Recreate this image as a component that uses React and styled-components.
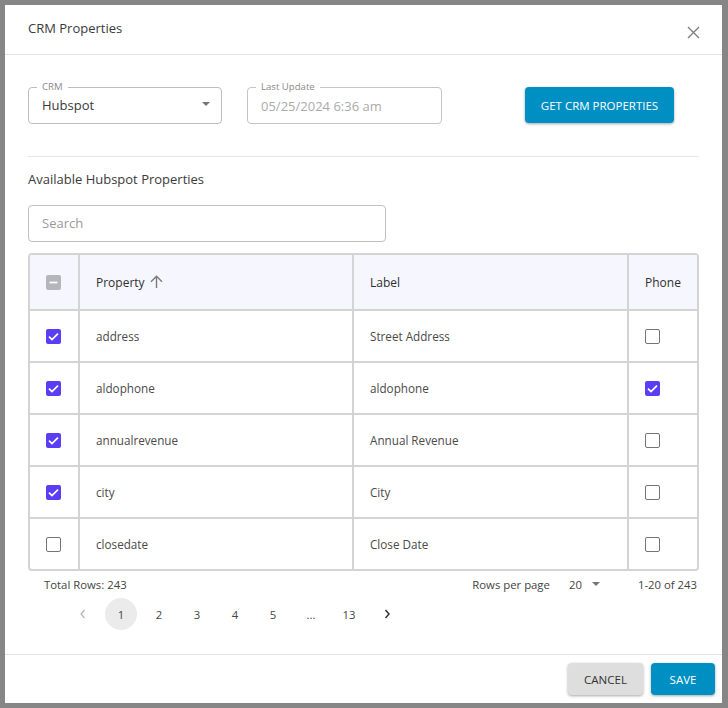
import styled, { createGlobalStyle } from 'styled-components';

const rows = [
  { name: 'address', label: 'Street Address', selected: true, phone: false },
  { name: 'aldophone', label: 'aldophone', selected: true, phone: true },
  { name: 'annualrevenue', label: 'Annual Revenue', selected: true, phone: false },
  { name: 'city', label: 'City', selected: true, phone: false },
  { name: 'closedate', label: 'Close Date', selected: false, phone: false },
];

const pages = ['1', '2', '3', '4', '5', '...', '13'];

const Check = ({ state }) => {
  if (state === 'checked') {
    return (
      <CheckBox $fill="#5b3df5">
        <svg width="15" height="15" viewBox="0 0 15 15">
          <path d="M3 7.6l3 3 6-6" fill="none" stroke="#fff" strokeWidth="1.7" />
        </svg>
      </CheckBox>
    );
  }
  if (state === 'mixed') {
    return (
      <CheckBox $fill="#b5b5bb">
        <svg width="15" height="15" viewBox="0 0 15 15">
          <path d="M3.5 7.5h8" fill="none" stroke="#fff" strokeWidth="1.7" />
        </svg>
      </CheckBox>
    );
  }
  return <CheckBox $outline />;
};

const App = () => {
  return (
    <>
      <GlobalStyle />
      <Dialog>
        <Header>
          <Title>CRM Properties</Title>
          <CloseButton>
            <svg width="13" height="13" viewBox="0 0 13 13">
              <path d="M1 1l11 11M12 1L1 12" fill="none" stroke="#7d7d7d" strokeWidth="1.3" />
            </svg>
          </CloseButton>
        </Header>

        <Content>
          <TopRow>
            <Field $width="194px">
              <FieldLabel>CRM</FieldLabel>
              <FieldValue>Hubspot</FieldValue>
              <Caret />
            </Field>
            <Field $width="195px" $disabled>
              <FieldLabel>Last Update</FieldLabel>
              <FieldValue $disabled>05/25/2024 6:36 am</FieldValue>
            </Field>
            <PrimaryButton $width="149px" $height="36px" $left="58px">GET CRM PROPERTIES</PrimaryButton>
          </TopRow>

          <Divider />
          <SectionTitle>Available Hubspot Properties</SectionTitle>
          <SearchBox>Search</SearchBox>

          <Table>
            <HeaderRow>
              <CheckCell $header><Check state="mixed" /></CheckCell>
              <Cell $header>
                Property
                <SortIcon width="13" height="14" viewBox="0 0 13 14">
                  <path d="M6.500 13V1.500M1 6.800l5.500-5.500L12 6.800" fill="none" stroke="#7b7b7b" strokeWidth="1.4" />
                </SortIcon>
              </Cell>
              <Cell $header>Label</Cell>
              <Cell $header $last>Phone</Cell>
            </HeaderRow>
            {rows.map((row) => (
              <Row key={row.name}>
                <CheckCell><Check state={row.selected ? 'checked' : 'empty'} /></CheckCell>
                <Cell>{row.name}</Cell>
                <Cell>{row.label}</Cell>
                <CheckCell $last><Check state={row.phone ? 'checked' : 'empty'} /></CheckCell>
              </Row>
            ))}
          </Table>

          <TableFooter>
            <span>Total Rows: 243</span>
            <RowsPerPage>
              <span>Rows per page</span>
              <PageSize>20</PageSize>
              <SmallCaret />
              <RowCount>1-20 of 243</RowCount>
            </RowsPerPage>
          </TableFooter>

          <Pagination>
            <PageArrow>
              <svg width="8" height="10" viewBox="0 0 8 10">
                <path d="M5.500 1L2 5l3.500 4" fill="none" stroke="#b4b4b4" strokeWidth="1.2" />
              </svg>
            </PageArrow>
            {pages.map((page) => (
              <PageItem key={page} $active={page === '1'}>{page}</PageItem>
            ))}
            <PageArrow>
              <svg width="8" height="10" viewBox="0 0 8 10">
                <path d="M2.500 1L6 5 2.500 9" fill="none" stroke="#333" strokeWidth="1.500" />
              </svg>
            </PageArrow>
          </Pagination>
        </Content>

        <Footer>
          <CancelButton>CANCEL</CancelButton>
          <PrimaryButton $width="64px" $height="32px">SAVE</PrimaryButton>
        </Footer>
      </Dialog>
    </>
  );
};

export default App;

const GlobalStyle = createGlobalStyle`
  html, body {
    margin: 0;
    height: 708px;
    overflow: hidden;
    background: #868686;
  }

  body {
    font-family: "Open Sans", "Liberation Sans", sans-serif;
    color: #3b3b3b;
  }
`;

const Dialog = styled.div`
  width: 717px;
  height: 698px;
  margin: 5px 0 0 5px;
  background: #fff;
  display: flex;
  flex-direction: column;
`;

const Header = styled.div`
  height: 50px;
  flex: none;
  box-sizing: border-box;
  padding: 13px 22px 0 23px;
  border-bottom: 1px solid #e2e2e2;
  display: flex;
  justify-content: space-between;
  align-items: flex-start;
`;

const Title = styled.div`
  font-size: 13px;
  line-height: 20px;
  color: #3a3a3a;
`;

const CloseButton = styled.div`
  display: flex;
  margin-top: 8px;
`;

const Content = styled.div`
  flex: 1;
  padding: 32px 23px 0;
`;

const TopRow = styled.div`
  display: flex;
  gap: 25px;
`;

const Field = styled.div`
  position: relative;
  width: ${(p) => p.$width};
  height: 37px;
  box-sizing: border-box;
  border: 1px solid ${(p) => (p.$disabled ? '#c4c4c4' : '#bdbdbd')};
  border-radius: 4px;
  padding: 0 13px ${(p) => (p.$disabled ? '0' : '2px')};
  display: flex;
  align-items: center;
`;

const FieldLabel = styled.span`
  position: absolute;
  left: 8px;
  top: -8px;
  padding: 0 5px;
  background: #fff;
  font-size: 9.6px;
  line-height: 13px;
  color: #8a8a8a;
`;

const FieldValue = styled.span`
  font-size: 13px;
  color: ${(p) => (p.$disabled ? '#aaaaaa' : '#3a3a3a')};
`;

const Caret = styled.span`
  position: absolute;
  right: 11px;
  top: 14px;
  border-left: 4.500px solid transparent;
  border-right: 4.500px solid transparent;
  border-top: 4.500px solid #757575;
`;

const PrimaryButton = styled.button`
  width: ${(p) => p.$width};
  height: ${(p) => p.$height};
  margin-left: ${(p) => p.$left || 0};
  padding: 0;
  border: none;
  border-radius: 4px;
  background: #008fc3;
  color: #fff;
  font-family: inherit;
  font-size: 11.5px;
  box-shadow: 0 1px 3px rgba(0, 0, 0, 0.35);
`;

const CancelButton = styled.button`
  width: 75px;
  height: 32px;
  padding: 0;
  border: none;
  border-radius: 4px;
  background: #dedede;
  color: #333;
  font-family: inherit;
  font-size: 11.5px;
  box-shadow: 0 1px 3px rgba(0, 0, 0, 0.35);
`;

const Divider = styled.div`
  height: 1px;
  margin-top: 32px;
  background: #e6e6e6;
`;

const SectionTitle = styled.div`
  margin-top: 13px;
  font-size: 13px;
  line-height: 18px;
  color: #3a3a3a;
`;

const SearchBox = styled.div`
  width: 358px;
  height: 37px;
  box-sizing: border-box;
  margin-top: 17px;
  padding: 0 13px 2px;
  border: 1px solid #c0c0c0;
  border-radius: 4px;
  display: flex;
  align-items: center;
  font-size: 13px;
  color: #9a9a9a;
`;

const Table = styled.div`
  width: 671px;
  box-sizing: border-box;
  margin-top: 11px;
  border: 2px solid #d4d4d4;
  border-radius: 4px;
`;

const Row = styled.div`
  display: grid;
  grid-template-columns: 50px 274px 275px 1fr;
  height: 52px;
  box-sizing: border-box;
  border-bottom: 2px solid #d4d4d4;

  &:last-child {
    height: 50px;
    border-bottom: none;
  }
`;

const HeaderRow = styled(Row)`
  height: 56px;
  background: #f6f7fe;
`;

const Cell = styled.div`
  box-sizing: border-box;
  display: flex;
  align-items: center;
  padding: 0 16px;
  font-size: ${(p) => (p.$header ? '12px' : '11.7px')};
  color: ${(p) => (p.$header ? '#2f2f2f' : '#4a4a4a')};
  border-right: ${(p) => (p.$last ? 'none' : '2px solid #d4d4d4')};
`;

const CheckCell = styled(Cell)`
  padding: 0 0 0 16px;
`;

const CheckBox = styled.span`
  width: 15px;
  height: 15px;
  box-sizing: border-box;
  display: flex;
  border-radius: 2px;
  background: ${(p) => p.$fill || '#fff'};
  border: ${(p) => (p.$outline ? '1.500px solid #757575' : 'none')};
`;

const SortIcon = styled.svg`
  margin-left: 5px;
`;

const TableFooter = styled.div`
  display: flex;
  justify-content: space-between;
  height: 26px;
  align-items: center;
  padding: 0 2px 0 16px;
  font-size: 11.35px;
  color: #444;
`;

const RowsPerPage = styled.div`
  display: flex;
  align-items: center;
`;

const PageSize = styled.span`
  margin-left: 19px;
`;

const SmallCaret = styled.span`
  margin-left: 10px;
  border-left: 4.500px solid transparent;
  border-right: 4.500px solid transparent;
  border-top: 4.500px solid #757575;
`;

const RowCount = styled.span`
  margin-left: 38px;
`;

const Pagination = styled.div`
  display: flex;
  align-items: center;
  gap: 6px;
  margin-top: 1px;
  padding-left: 39px;
`;

const PageItem = styled.span`
  width: 32px;
  height: 32px;
  border-radius: 50%;
  display: flex;
  align-items: center;
  justify-content: center;
  font-size: 11.35px;
  color: #444;
  background: ${(p) => (p.$active ? '#ebebeb' : 'transparent')};
`;

const PageArrow = styled(PageItem)``;

const Footer = styled.div`
  height: 49px;
  flex: none;
  box-sizing: border-box;
  border-top: 1px solid #e2e2e2;
  padding: 8px 7px 0 0;
  display: flex;
  justify-content: flex-end;
  align-items: flex-start;
  gap: 8px;
`;
